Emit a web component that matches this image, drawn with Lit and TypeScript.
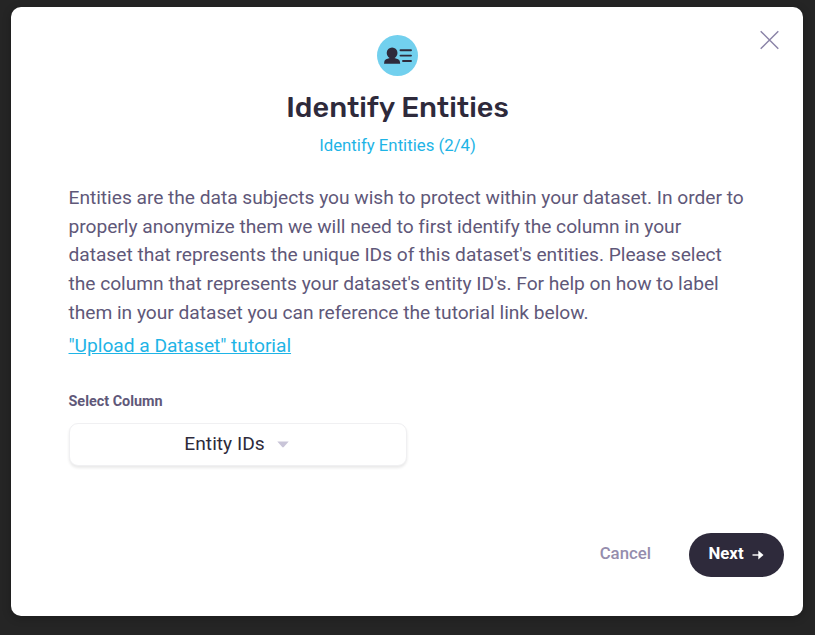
import { LitElement, html, css } from "lit";
import { customElement } from "lit/decorators.js";

const LINES = [
  "Entities are the data subjects you wish to protect within your dataset. In order to",
  "properly anonymize them we will need to first identify the column in your",
  "dataset that represents the unique IDs of this dataset's entities. Please select",
  "the column that represents your dataset's entity ID's. For help on how to label",
  "them in your dataset you can reference the tutorial link below.",
];

@customElement("app-root")
export class AppRoot extends LitElement {
  static styles = css`
    :host {
      display: block;
      box-sizing: border-box;
      width: 815px;
      height: 635px;
      padding: 6.5px 12px 0 11px;
      background: #252525;
      font-family: Roboto, "Open Sans", sans-serif;
    }
    .modal {
      position: relative;
      box-sizing: border-box;
      height: 609px;
      padding: 28.5px 19px 0 57.5px;
      display: flex;
      flex-direction: column;
      background: #fff;
      border-radius: 10px;
      box-shadow: 0 2px 8px rgba(0, 0, 0, 0.25);
    }
    .close {
      position: absolute;
      top: 23.5px;
      right: 23px;
      width: 20px;
      height: 20px;
      padding: 0;
      border: 0;
      background: none;
    }
    svg {
      display: block;
    }
    header {
      width: 658px;
      display: flex;
      flex-direction: column;
      align-items: center;
    }
    h1 {
      margin: 11px 0 0;
      font-family: Rubik, Roboto, sans-serif;
      font-size: 28.8px;
      line-height: 40px;
      font-weight: 500;
      color: #2e2a3b;
      white-space: nowrap;
    }
    .step {
      margin-top: 7px;
      font-size: 16.8px;
      line-height: 22px;
      color: #1eb4e6;
      white-space: nowrap;
    }
    .copy {
      margin: 27.85px 0 0;
      font-size: 19.2px;
      line-height: 28.8px;
      letter-spacing: -0.026px;
      color: #5f5879;
      white-space: nowrap;
    }
    .copy span {
      display: block;
    }
    .link {
      align-self: flex-start;
      margin-top: 4.15px;
      font-size: 19.2px;
      line-height: 28.8px;
      letter-spacing: -0.03px;
      color: #1eb4e6;
      text-decoration: underline;
      white-space: nowrap;
    }
    .label {
      margin-top: 31px;
      font-size: 14.4px;
      line-height: 20px;
      font-weight: 700;
      color: #5f5879;
    }
    .select {
      box-sizing: border-box;
      width: 338px;
      height: 43px;
      margin-top: 11px;
      padding: 0 2px 1px 0;
      display: flex;
      align-items: center;
      justify-content: center;
      gap: 12px;
      border: 1px solid #f0f0f2;
      border-radius: 9px;
      background: #fff;
      box-shadow: 0 2px 3px rgba(0, 0, 0, 0.09);
      font: 19.2px Roboto, sans-serif;
      color: #2e2a3b;
    }
    .select svg {
      margin-top: 1px;
    }
    footer {
      margin-top: 67px;
      display: flex;
      align-items: center;
      justify-content: flex-end;
      gap: 38px;
    }
    button {
      font-family: inherit;
    }
    .cancel {
      padding: 0 0 3px;
      border: 0;
      background: none;
      font-size: 16.8px;
      font-weight: 500;
      color: #958dad;
    }
    .next {
      box-sizing: border-box;
      width: 95px;
      height: 44px;
      padding: 0 1px 3px 0;
      display: flex;
      align-items: center;
      justify-content: center;
      gap: 8px;
      border: 0;
      border-radius: 22px;
      background: #2e2a3b;
      font-size: 16.8px;
      font-weight: 700;
      color: #fff;
    }
    .next svg {
      margin-top: 3px;
    }
  `;

  render() {
    return html`
      <div class="modal">
        <button class="close" aria-label="Close">
          <svg width="20" height="20" viewBox="0 0 20 20">
            <path d="M0.7 1.2 18.3 18.8M18.3 1.2 0.7 18.8" fill="none" stroke="#8b84a8" stroke-width="1.5" />
          </svg>
        </button>
        <header>
          <svg width="41" height="41" viewBox="0 0 41 41">
            <circle cx="20.5" cy="20.5" r="20.5" fill="#72d0ee" />
            <g fill="#2e2a3b">
              <ellipse cx="15.1" cy="18" rx="5.4" ry="5.5" />
              <path d="M12.8 21h4.6v2l3.8 1.3q2 1 2 4.4H7q0-3.4 2-4.4l3.8-1.3z" />
            </g>
            <path d="M23.5 15.3H34M23.5 20.6H34M26 26H34" fill="none" stroke="#2e2a3b" stroke-width="1.9" stroke-linecap="round" />
          </svg>
          <h1>Identify Entities</h1>
          <div class="step">Identify Entities (2/4)</div>
        </header>
        <p class="copy">${LINES.map((line) => html`<span>${line}</span>`)}</p>
        <a class="link">"Upload a Dataset" tutorial</a>
        <div class="label">Select Column</div>
        <button class="select">
          <span>Entity IDs</span>
          <svg width="12" height="7" viewBox="0 0 12 7"><path d="M0.3 0.5H11.7L6.8 6.1Q6 6.9 5.2 6.1z" fill="#c9c5d8" /></svg>
        </button>
        <footer>
          <button class="cancel">Cancel</button>
          <button class="next">
            <span>Next</span>
            <svg width="12" height="10" viewBox="0 0 12 10">
              <path d="M0.5 5H7" stroke="#fff" stroke-width="1.4" />
              <path d="M6.3 0.5 11.5 5 6.3 9.5z" fill="#fff" />
            </svg>
          </button>
        </footer>
      </div>
    `;
  }
}
